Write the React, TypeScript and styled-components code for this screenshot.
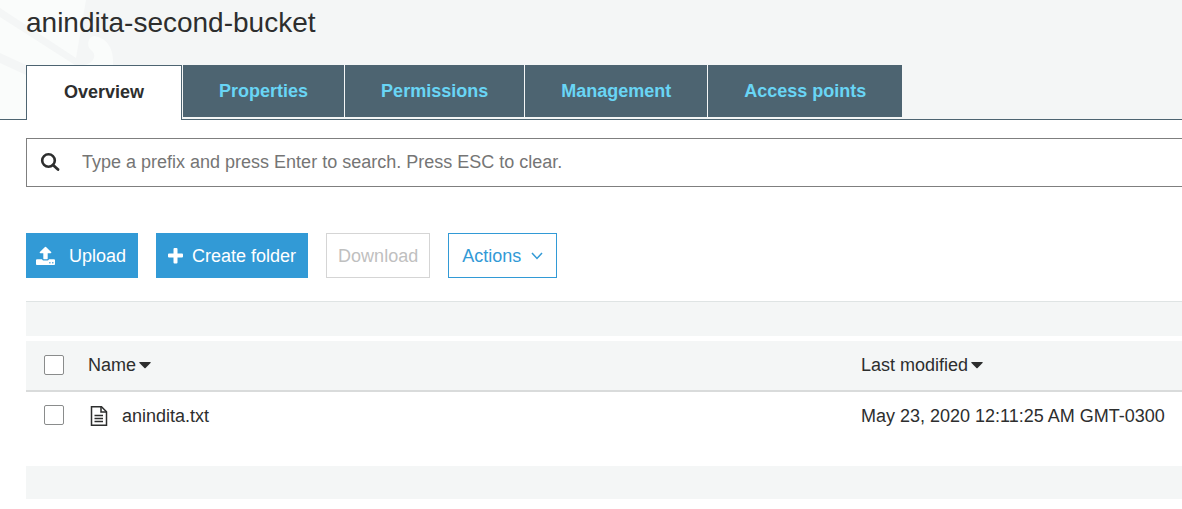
import React from 'react';
import styled, { createGlobalStyle } from 'styled-components';

const GlobalStyle = createGlobalStyle`
  *, *::before, *::after { box-sizing: border-box; }
  body {
    margin: 0;
    background: #fff;
    color: #2d2e2e;
    font: 18px/24px "Liberation Sans", Arial, sans-serif;
    overflow-x: hidden;
  }
  button, input { font: inherit; color: inherit; }
`;

const Header = styled.header`
  position: relative;
  background: #f4f6f6;
  overflow: hidden;
`;

const Watermark = styled.svg`
  position: absolute;
  left: 0;
  top: 0;
  pointer-events: none;
`;

const Title = styled.h1`
  position: relative;
  margin: 0;
  padding: 7px 26px 26px;
  font-size: 28px;
  line-height: 32px;
  font-weight: 400;
`;

const Tabs = styled.nav`
  position: relative;
  display: flex;
  align-items: stretch;

  &::before, &::after {
    content: "";
    border-bottom: 1px solid #4d6471;
  }
  &::before { flex: 0 0 26px; }
  &::after { flex: 1; }
`;

const TabSlot = styled.div<{ $active?: boolean }>`
  display: flex;
  padding: ${p => (p.$active ? '0' : '0 0 2px 1px')};
  border-bottom: ${p => (p.$active ? '0' : '1px solid #4d6471')};
`;

const Tab = styled.a<{ $active?: boolean }>`
  display: block;
  padding: ${p => (p.$active ? '14px 37px 15px' : '14px 36px')};
  font-weight: 700;
  text-decoration: none;
  white-space: nowrap;
  color: ${p => (p.$active ? '#2d2e2e' : '#69d5f5')};
  background: ${p => (p.$active ? '#fff' : '#4d6471')};
  border: ${p => (p.$active ? '1px solid #4d6471' : '0')};
  border-bottom: 0;
`;

const Main = styled.main`
  padding: 18px 0 10px 26px;
`;

const SearchBox = styled.label`
  display: flex;
  align-items: center;
  height: 49px;
  padding: 0 0 2px 13px;
  border: 1px solid #7f7f7f;
  border-right: 0;
`;

const SearchInput = styled.input`
  flex: 1;
  min-width: 0;
  margin-left: 22px;
  padding: 0;
  border: 0;
  outline: 0;
  background: none;
  &::placeholder { color: #757575; opacity: 1; }
`;

const Toolbar = styled.div`
  display: flex;
  gap: 18px;
  margin: 46px 0 23px;
`;

const Button = styled.button<{ $primary?: boolean; $gap?: number }>`
  display: flex;
  align-items: center;
  gap: ${p => p.$gap ?? 7}px;
  height: 45px;
  padding: ${p => (p.$primary ? '0 11px 0 9px' : '0 13px')};
  border: 1px solid #329ad6;
  background: ${p => (p.$primary ? '#329ad6' : '#fff')};
  color: ${p => (p.$primary ? '#fff' : '#329ad6')};
  white-space: nowrap;
  &:disabled { padding: 0 11px; color: #bfc0c0; border-color: #d5d5d5; }
`;

const Strip = styled.div<{ $line?: boolean }>`
  height: ${p => (p.$line ? 35 : 33)}px;
  background: #f4f6f6;
  border-top: ${p => (p.$line ? '1px solid #dfe4e4' : '0')};
`;

const Table = styled.table`
  width: 100%;
  margin-top: 5px;
  border-collapse: collapse;
  table-layout: fixed;
`;

const HeadRow = styled.tr`
  height: 50px;
  background: #f4f6f6;
  border-bottom: 2px solid #d9dbdb;
`;

const BodyRow = styled.tr`
  height: 75px;
  vertical-align: top;
`;

const HeadCell = styled.th<{ $width?: number }>`
  width: ${p => (p.$width ? `${p.$width}px` : 'auto')};
  padding: 0 0 1px;
  text-align: left;
  font-weight: 400;
`;

const Cell = styled.td`
  padding: 12px 0 0;
  white-space: nowrap;
`;

const Check = styled.input`
  display: block;
  appearance: none;
  width: 20px;
  height: 20px;
  margin: 0 0 0 18px;
  border: 1px solid #8a8c8c;
  border-radius: 2px;
  background: #fff;
  &:checked { background: #329ad6; }
`;

const CheckCell = styled(Cell)`
  padding-top: 13px;
`;

const SortButton = styled.button`
  display: flex;
  align-items: center;
  gap: 3px;
  padding: 0;
  border: 0;
  background: none;
`;

const FileLink = styled.a`
  display: flex;
  align-items: center;
  gap: 14px;
  padding-left: 2px;
  color: inherit;
  text-decoration: none;
`;

const Caret = () => (
  <svg width="12" height="7" viewBox="0 0 12 7" aria-hidden="true">
    <path d="M.8 0H11.2Q12.200 .2 11.500 1L6.600 6Q6 6.500 5.400 6L.5 1Q-.2 .2 .8 0Z" fill="#2d2e2e" />
  </svg>
);

const SearchIcon = () => (
  <svg width="20" height="20" viewBox="0 0 20 20" fill="none" stroke="#2d2e2e" aria-hidden="true">
    <circle cx="8.500" cy="8.500" r="6.300" strokeWidth="2.600" />
    <path d="M13 13L18 17.500" strokeWidth="2.800" strokeLinecap="round" />
  </svg>
);

const UploadIcon = () => (
  <svg width="19" height="19" viewBox="64 0 1664 1664" fill="currentColor" aria-hidden="true">
    <path d="M1344 1472q0-26-19-45t-45-19-45 19-19 45 19 45 45 19 45-19 19-45zm256 0q0-26-19-45t-45-19-45 19-19 45 19 45 45 19 45-19 19-45zm128-224v320q0 40-28 68t-68 28h-1472q-40 0-68-28t-28-68v-320q0-40 28-68t68-28h427q21 56 70.500 92t110.500 36h256q61 0 110.500-36t70.500-92h427q40 0 68 28t28 68zm-325-648q-17 40-59 40h-256v448q0 26-19 45t-45 19h-256q-26 0-45-19t-19-45v-448h-256q-42 0-59-40-17-39 14-69l448-448q18-19 45-19t45 19l448 448q31 30 14 69z" />
  </svg>
);

const PlusIcon = () => (
  <svg width="19" height="16" viewBox="-2 0 19 16" fill="currentColor" aria-hidden="true">
    <path d="M6.500 0H8.500Q9.500 0 9.500 1V5.500H14Q15 5.500 15 6.500V8.500Q15 9.500 14 9.500H9.500V14.500Q9.500 15.500 8.500 15.500H6.500Q5.500 15.500 5.500 14.500V9.500H1Q0 9.500 0 8.500V6.500Q0 5.500 1 5.500H5.500V1Q5.500 0 6.500 0Z" />
  </svg>
);

const ChevronIcon = () => (
  <svg width="12" height="8" viewBox="0 0 12 8" fill="none" stroke="currentColor" strokeWidth="1.500" aria-hidden="true">
    <path d="M1 1L6 6.500L11 1" />
  </svg>
);

const FileIcon = () => (
  <svg width="18" height="20" viewBox="0 0 18 20" fill="none" stroke="#2d2e2e" strokeWidth="1.500" aria-hidden="true">
    <path d="M1.500 .8H11.500L16.500 5.800V19.200H1.500Z" />
    <path d="M11 1V6H16.500" />
    <path d="M4.500 9.500H13M4.500 12.500H13M4.500 15.500H13" />
  </svg>
);

const tabs = ['Overview', 'Properties', 'Permissions', 'Management', 'Access points'];

export default function App() {
  return (
    <>
      <GlobalStyle />
      <Header>
        <Watermark width="130" height="119" viewBox="0 0 130 119" aria-hidden="true">
          <path d="M0 0H86L76 58L0 8ZM0 17L75 65V119H0V63L26 75V65L0 53Z" fill="#fafcfb" />
          <path d="M94 36C108 38 114 50 113 65H84C95 63 97 54 91 50C86 46 88 37 94 36Z" fill="#fafcfb" />
        </Watermark>
        <Title>anindita-second-bucket</Title>
        <Tabs>
          {tabs.map((name, i) => (
            <TabSlot key={name} $active={i === 0}>
              <Tab href="#" $active={i === 0}>{name}</Tab>
            </TabSlot>
          ))}
        </Tabs>
      </Header>
      <Main>
        <SearchBox>
          <SearchIcon />
          <SearchInput
            type="text"
            aria-label="Search"
            placeholder="Type a prefix and press Enter to search. Press ESC to clear."
          />
        </SearchBox>
        <Toolbar>
          <Button $primary $gap={14}><UploadIcon />Upload</Button>
          <Button $primary><PlusIcon />Create folder</Button>
          <Button disabled>Download</Button>
          <Button $gap={10}>Actions<ChevronIcon /></Button>
        </Toolbar>
        <Strip $line />
        <Table>
          <thead>
            <HeadRow>
              <HeadCell $width={62}><Check type="checkbox" aria-label="Select all" /></HeadCell>
              <HeadCell><SortButton>Name<Caret /></SortButton></HeadCell>
              <HeadCell $width={321}><SortButton>Last modified<Caret /></SortButton></HeadCell>
            </HeadRow>
          </thead>
          <tbody>
            <BodyRow>
              <CheckCell><Check type="checkbox" aria-label="Select anindita.txt" /></CheckCell>
              <Cell><FileLink href="#"><FileIcon />anindita.txt</FileLink></Cell>
              <Cell>May 23, 2020 12:11:25 AM GMT-0300</Cell>
            </BodyRow>
          </tbody>
        </Table>
        <Strip />
      </Main>
    </>
  );
}
